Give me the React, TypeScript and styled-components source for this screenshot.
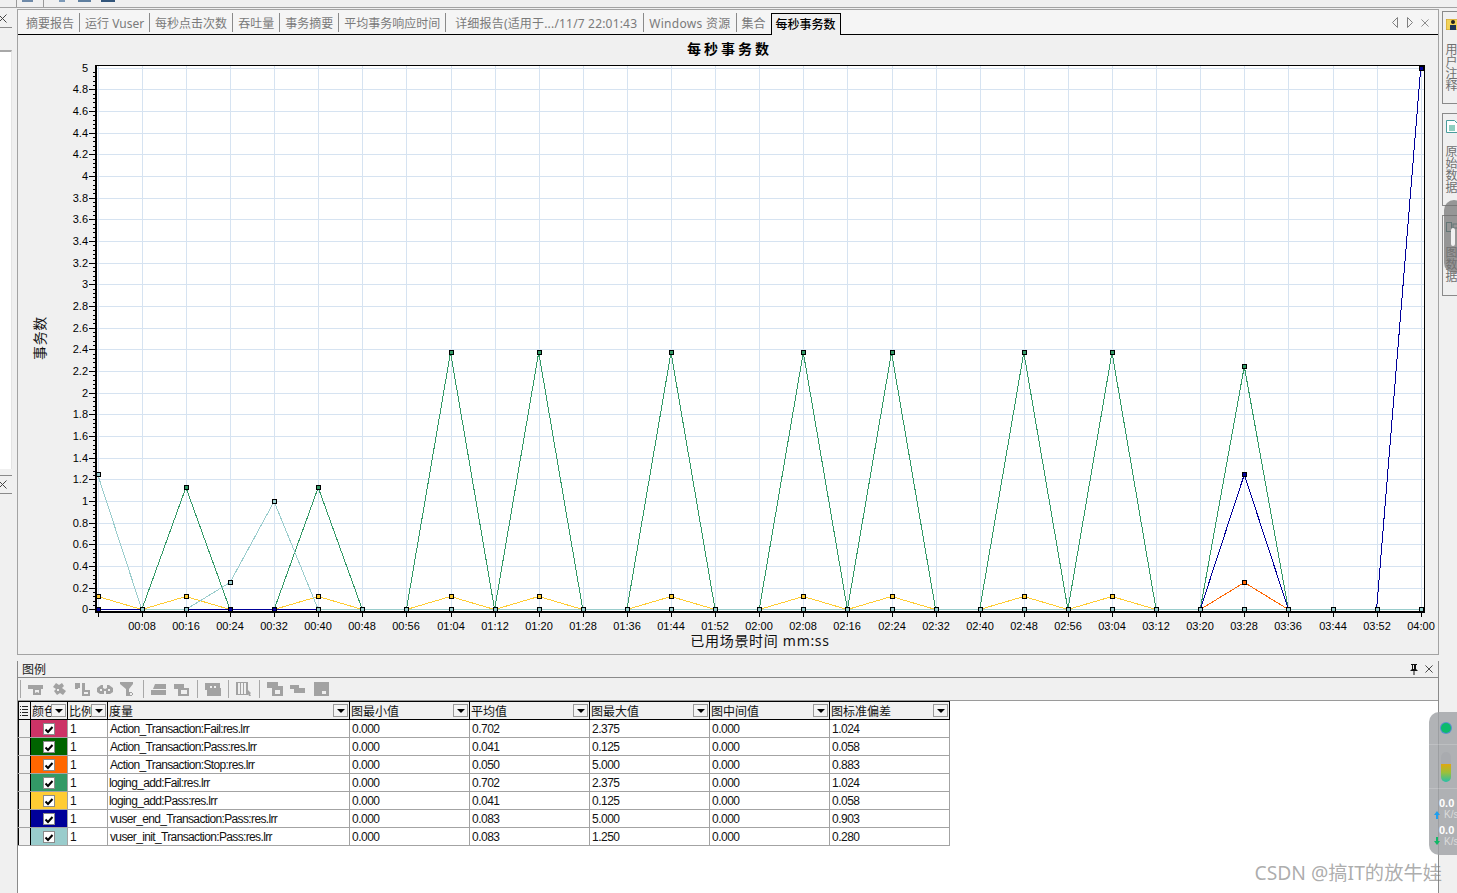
import React from "react";
import styled, { createGlobalStyle } from "styled-components";

const Global = createGlobalStyle`
  html, body { margin: 0; padding: 0; background: #f0f0f0; }
  #root { width: 1457px; height: 893px; overflow: hidden; }
`;

const FONT = `"Noto Sans", "Noto Sans CJK SC", sans-serif`;
const CELL_FONT = `"Liberation Sans", "Noto Sans CJK SC", sans-serif`;

const Page = styled.div`
  position: relative;
  width: 1457px;
  height: 893px;
  overflow: hidden;
  background: #f0f0f0;
  font-family: ${FONT};
  display: flex;
  flex-direction: column;
`;
const TopStrip = styled.div`
  height: 7px;
  flex: none;
  border-bottom: 1px solid #a3a3a3;
  display: flex;
  align-items: flex-end;
  overflow: hidden;
`;
const TopSep = styled.span<{ $left: number }>`
  width: 1px;
  height: 7px;
  background: #9a9a9a;
  margin-left: ${(p) => p.$left}px;
`;
const TopBit = styled.span<{ $left: number; $w: number; $c: string }>`
  width: ${(p) => p.$w}px;
  height: 2px;
  background: ${(p) => p.$c};
  margin: 0 0 5px ${(p) => p.$left}px;
`;
const Body = styled.div`
  flex: 1;
  display: flex;
  min-height: 0;
`;
const LeftColumn = styled.div`
  width: 17px;
  flex: none;
  display: flex;
  flex-direction: column;
`;
const PaneClose = styled.div<{ $top?: boolean }>`
  width: 12px;
  height: 17px;
  margin-top: ${(p) => (p.$top ? 6 : 2)}px;
  border-bottom: 1px solid #8a8a8a;
  border-top: ${(p) => (p.$top ? "1px solid #8a8a8a" : "none")};
  display: flex;
  align-items: center;
  overflow: hidden;
  color: #444;
  & > svg {
    margin-left: -2px;
    flex: none;
  }
`;
const WhitePane = styled.div`
  width: 11px;
  height: 417px;
  margin-top: 22px;
  background: #fff;
  border-top: 2px solid #a8a8a8;
  border-right: 1px solid #e4e4e4;
`;
const Center = styled.div`
  width: 1422px;
  flex: none;
  display: flex;
  flex-direction: column;
`;
const ChartPanel = styled.section`
  height: 646px;
  margin-top: 1px;
  flex: none;
  box-sizing: border-box;
  border: 1px solid #a3a3a3;
  display: flex;
  flex-direction: column;
`;
const TabBar = styled.nav`
  height: 25px;
  flex: none;
  box-sizing: border-box;
  background: #f5f5f5;
  border-bottom: 1px solid #000;
  display: flex;
  align-items: flex-end;
  padding-left: 3px;
  padding-bottom: 2px;
`;
const Tab = styled.span<{ $pl?: number; $pr?: number; $ls?: number; $last?: boolean }>`
  height: 19px;
  line-height: 22px;
  font-size: 12px;
  color: #7a7a7a;
  white-space: nowrap;
  letter-spacing: ${(p) => p.$ls ?? 0}px;
  padding: 0 ${(p) => p.$pr ?? 5}px 0 ${(p) => p.$pl ?? 5}px;
  border-right: ${(p) => (p.$last ? "none" : "1px solid #8a8a8a")};
`;
const ActiveTab = styled.span`
  height: 22px;
  box-sizing: border-box;
  margin: 0 0 -3px 0;
  padding: 0 4px 0 4px;
  line-height: 21px;
  font-size: 12px;
  font-weight: 500;
  color: #000;
  background: #f0f0f0;
  border: 1px solid #000;
  border-bottom: none;
  white-space: nowrap;
`;
const TabNav = styled.div`
  margin-left: auto;
  display: flex;
  align-items: center;
  gap: 7px;
  height: 19px;
  padding-right: 9px;
  color: #808080;
`;
const ChartTitle = styled.h1`
  margin: 0;
  height: 28px;
  flex: none;
  text-align: center;
  font-size: 14px;
  line-height: 28px;
  font-weight: 700;
  letter-spacing: 3px;
  color: #000;
  padding-left: 3px;
`;
const ChartSvg = styled.svg`
  display: block;
  width: 1420px;
  height: 591px;
  flex: none;
`;
const AxisText = styled.text`
  font-family: ${CELL_FONT};
  font-size: 11px;
  fill: #000;
`;
const AxisTitle = styled.text`
  font-family: ${FONT};
  font-size: 14px;
  letter-spacing: 0.7px;
  fill: #111;
`;
const LegendPanel = styled.section`
  flex: 1;
  margin-top: 6px;
  display: flex;
  flex-direction: column;
  min-height: 0;
  border-left: 1px solid #8a8a8a;
  border-right: 1px solid #8a8a8a;
  box-sizing: border-box;
  width: 1422px;
`;
const LegendHead = styled.header`
  height: 17px;
  flex: none;
  box-sizing: border-box;
  border-bottom: 1px solid #8a8a8a;
  display: flex;
  align-items: center;
  padding: 0 5px 0 4px;
  font-size: 12px;
  color: #222;
`;
const HeadIcons = styled.div`
  margin-left: auto;
  display: flex;
  align-items: center;
  gap: 7px;
  color: #333;
`;
const Toolbar = styled.div`
  height: 22px;
  flex: none;
  box-sizing: border-box;
  display: flex;
  align-items: center;
  padding: 0 0 0 2px;
  background: #f0f0f0;
`;
const ToolSep = styled.span`
  width: 1px;
  height: 18px;
  background: #a8a8a8;
  margin-right: 7px;
`;
const ToolIcon = styled.svg`
  width: 16px;
  height: 14px;
  flex: none;
  margin-right: 7px;
  fill: #a2a2a2;
`;
const TableArea = styled.div`
  flex: 1;
  background: #fff;
  border-top: 1px solid #9a9a9a;
  min-height: 0;
`;
const Grid = styled.table`
  border-collapse: collapse;
  table-layout: fixed;
  width: 931px;
  font-family: ${CELL_FONT};
  font-size: 12px;
  color: #111;
`;
const HeadCell = styled.th`
  height: 18px;
  box-sizing: border-box;
  padding: 0 1px 0 1px;
  background: #f0f0f0;
  border: 1px solid #000;
  font-weight: 400;
  text-align: left;
  overflow: hidden;
`;
const HeadInner = styled.div`
  display: flex;
  align-items: center;
  justify-content: space-between;
  height: 16px;
  font-family: "Noto Sans CJK SC", ${CELL_FONT};
`;
const HeadLabel = styled.span`
  flex: 1;
  min-width: 0;
  overflow: hidden;
  white-space: nowrap;
`;
const DropButton = styled.span`
  flex: none;
  width: 15px;
  height: 13px;
  box-sizing: border-box;
  border: 1px solid #9a9a9a;
  background: #f4f4f4;
  display: flex;
  align-items: center;
  justify-content: center;
  &::after {
    content: "";
    border-left: 4px solid transparent;
    border-right: 4px solid transparent;
    border-top: 4px solid #000;
  }
`;
const Row = styled.tr``;
const Cell = styled.td`
  height: 18px;
  box-sizing: border-box;
  padding: 0 0 0 2px;
  border: 1px solid #a3a3a3;
  white-space: nowrap;
  overflow: hidden;
  letter-spacing: -0.64px;
  line-height: 16px;
`;
const MeasureCell = styled(Cell)<{ $inset?: number }>`
  padding-left: ${(p) => p.$inset ?? 2}px;
`;
const NumberCell = styled(Cell)`
  letter-spacing: -0.5px;
`;
const SelectorCell = styled.td`
  height: 18px;
  box-sizing: border-box;
  padding: 0;
  background: #f0f0f0;
  border: 1px solid #a3a3a3;
  border-left: 1px solid #000;
  border-right: 1px solid #000;
`;
const ColorCell = styled.td<{ $c: string }>`
  height: 18px;
  box-sizing: border-box;
  padding: 0;
  background: ${(p) => p.$c};
  border: 1px solid #a3a3a3;
  border-left: 1px solid #000;
`;
const Check = styled.span`
  display: block;
  box-sizing: border-box;
  width: 12px;
  height: 12px;
  margin: 1px 0 0 12px;
  background: #fff;
  border: 1px solid #8a8a8a;
`;
const RightRail = styled.aside`
  margin-left: 3px;
  flex: 1;
  min-width: 0;
  display: flex;
  flex-direction: column;
  overflow: hidden;
`;
const RailTab = styled.div<{ $h: number; $mt: number; $gap: number; $pt: number }>`
  height: ${(p) => p.$h}px;
  margin-top: ${(p) => p.$mt}px;
  box-sizing: border-box;
  border: 1px solid #8a8a8a;
  border-right: none;
  padding: ${(p) => p.$pt}px 0 0 3px;
  display: flex;
  flex-direction: column;
  gap: ${(p) => p.$gap}px;
  width: 20px;
`;
const RailText = styled.span`
  writing-mode: vertical-rl;
  text-orientation: upright;
  font-size: 12px;
  line-height: 12px;
  color: #6f6f6f;
  width: 12px;
  margin-left: -2px;
`;
const ScrollBlob = styled.div`
  position: absolute;
  left: 1444px;
  top: 200px;
  width: 20px;
  height: 73px;
  border-radius: 12px;
  background: rgba(115, 115, 115, 0.72);
`;
const ScrollThumb = styled.div`
  position: absolute;
  left: 1451px;
  top: 228px;
  width: 4px;
  height: 18px;
  border-radius: 2px;
  background: #f1f1f1;
`;
const NetWidget = styled.div`
  position: absolute;
  left: 1429px;
  top: 712px;
  width: 40px;
  height: 143px;
  box-sizing: border-box;
  border-radius: 10px;
  background: rgba(160, 162, 166, 0.82);
  display: flex;
  flex-direction: column;
  align-items: flex-start;
`;
const WidgetBlock = styled.div<{ $h: number; $line?: boolean }>`
  height: ${(p) => p.$h}px;
  width: 100%;
  box-sizing: border-box;
  border-bottom: ${(p) => (p.$line ? "1px solid rgba(255,255,255,.18)" : "none")};
  display: flex;
  align-items: center;
  padding-left: 12px;
`;
const Dot = styled.span`
  width: 10px;
  height: 10px;
  border-radius: 50%;
  background: #0dbb6c;
  box-shadow: 0 0 0 1px #5a8fd0;
`;
const Battery = styled.span`
  width: 10px;
  height: 30px;
  border-radius: 5px;
  background: linear-gradient(#a9abaf 0 40%, #e0a70f 40%, #9cc03a 68%, #27bfa8 100%);
`;
const SpeedList = styled.div`
  display: flex;
  flex-direction: column;
  gap: 4px;
  padding-top: 8px;
`;
const Speed = styled.div`
  display: grid;
  grid-template-columns: 11px auto;
  padding-left: 4px;
  height: 23px;
  font-family: ${CELL_FONT};
  font-size: 11px;
  line-height: 12px;
  color: #fff;
  font-weight: 700;
`;
const SpeedValue = styled.span`
  grid-column: 1 / span 2;
  padding-left: 6px;
`;
const SpeedUnit = styled.span`
  font-weight: 400;
  font-size: 10px;
  color: #dcdcdc;
`;
const Watermark = styled.div`
  position: absolute;
  right: 15px;
  top: 860px;
  font-family: "Noto Sans", "Noto Sans CJK SC", sans-serif;
  font-size: 19.3px;
  line-height: 26px;
  white-space: nowrap;
  color: rgba(120, 120, 120, 0.62);
`;

const X0 = 97.7;
const XS = 44.1;
const Y0 = 609.3;
const YS = 108.3;
const xp = (i: number) => X0 + i * XS;
const yp = (v: number) => Y0 - v * YS;
const pad = (n: number) => String(n).padStart(2, "0");
const timeLabel = (i: number) => `${pad(Math.floor((i * 8) / 60))}:${pad((i * 8) % 60)}`;

const build = (m: Record<number, number>) => Array.from({ length: 31 }, (_, i) => m[i] ?? 0);
const failPeaks = { 2: 1.125, 5: 1.125, 8: 2.375, 10: 2.375, 13: 2.375, 16: 2.375, 18: 2.375, 21: 2.375, 23: 2.375, 26: 2.25 };
const passPeaks = { 0: 0.125, 2: 0.125, 5: 0.125, 8: 0.125, 10: 0.125, 13: 0.125, 16: 0.125, 18: 0.125, 21: 0.125, 23: 0.125 };

const series = [
  { c: "#cc3366", d: build(failPeaks) },
  { c: "#006400", d: build(passPeaks) },
  { c: "#ff6600", d: build({ 26: 0.25, 30: 5 }) },
  { c: "#339966", d: build(failPeaks) },
  { c: "#ffcc33", d: build(passPeaks) },
  { c: "#000099", d: build({ 26: 1.25, 30: 5 }) },
  { c: "#99cccc", d: build({ 0: 1.25, 3: 0.25, 4: 1 }) },
];

const rows = [
  ["#cc3366", "Action_Transaction:Fail:res.lrr", 2, "0.702", "2.375", "1.024"],
  ["#006400", "Action_Transaction:Pass:res.lrr", 2, "0.041", "0.125", "0.058"],
  ["#ff6600", "Action_Transaction:Stop:res.lrr", 2, "0.050", "5.000", "0.883"],
  ["#339966", "loging_add:Fail:res.lrr", 1, "0.702", "2.375", "1.024"],
  ["#ffcc33", "loging_add:Pass:res.lrr", 1, "0.041", "0.125", "0.058"],
  ["#000099", "vuser_end_Transaction:Pass:res.lrr", 2, "0.083", "5.000", "0.903"],
  ["#99cccc", "vuser_init_Transaction:Pass:res.lrr", 2, "0.083", "1.250", "0.280"],
] as const;

const columns = [12, 37, 40, 242, 120, 120, 120, 120, 120];
const heads = ["颜色", "比例", "度量", "图最小值", "平均值", "图最大值", "图中间值", "图标准偏差"];
const tabs = ["摘要报告", "运行 Vuser", "每秒点击次数", "吞吐量", "事务摘要", "平均事务响应时间"];

const toolPaths = [
  "M0 3h15v4h-2v6H5V7H0zM7 8v3l2-1 2 1V8z",
  "M5 1l3 2 3-2 2 3-2 2 4 3-3 4-3-2-3 2-3-4 2-2-3-2zM6 7v2h2V7z",
  "M1 1h5v5H4v1H1zM8 1h3v7h5v6H8zM10 10v2h4v-2z",
  "M0 6l4-3h2v3l2 1 2-1V3h2l4 3v4l-3 2H9V9H7v3H3L0 10zM3 7v2h2V7zM11 7v2h2V7z",
  "M0 0h13v2l-4 5v3h3v4H6V7L0 2zM10 11v2h3v-2z",
  "M4 2h11v5H2zM0 8h15v5H0z",
  "M0 2h10v4h5v8H4V7H0zM7 8v4h6V8z",
  "M0 1h15v5h1v8H2V8H0zM5 4v2h2V4zM9 4v2h2V4z",
  "M0 0h12v13H0zM2 1v11h2V1zM5 1v11h2V1zM8 1v11h2V1zM12 8l3 3-1 1 1 2h-2l-1-2z",
  "M0 0h11v4h5v10H5V6H0zM8 8v4h5V8z",
  "M0 3h9v3h6v5H4V7H0z",
  "M1 0h15v14H1zM9 9v3h4V9z",
];
const toolGroups = [[0, 1, 2, 3, 4], [5, 6], [7], [8], [9, 10, 11]];

function CloseGlyph({ size = 9 }: { size?: number }) {
  return (
    <svg width={size} height={size} viewBox="0 0 9 9" fill="none" stroke="currentColor" strokeWidth="1">
      <path d="M0.5 0.5l8 8M8.5 0.5l-8 8" />
    </svg>
  );
}

function Chart() {
  const vGrid = Array.from({ length: 31 }, (_, i) => Math.round(xp(i)) + 0.5);
  const hVals = Array.from({ length: 26 }, (_, i) => i * 0.2);
  const minor = Array.from({ length: 125 }, (_, i) => yp(i * 0.04));
  return (
    <ChartSvg viewBox="18 63 1420 591">
      <rect x="96" y="65" width="1328" height="546" fill="#fff" />
      <g stroke="#d6e3f1" strokeWidth="1" shapeRendering="crispEdges">
        {vGrid.map((x) => (
          <line key={x} x1={x} x2={x} y1="66" y2="611" />
        ))}
        {hVals.map((v) => (
          <line key={v} x1="97" x2="1424" y1={Math.round(yp(v)) + 0.5} y2={Math.round(yp(v)) + 0.5} />
        ))}
      </g>
      <g stroke="#000" shapeRendering="crispEdges">
        <line x1="95" x2="1425" y1="65.5" y2="65.5" />
        <line x1="1424.5" x2="1424.5" y1="65" y2="613" />
        <rect x="95" y="65" width="2" height="548" fill="#000" stroke="none" />
        <rect x="95" y="611" width="1330" height="2" fill="#000" stroke="none" />
        {minor.map((y, i) => (
          <line key={i} x1={i % 5 === 0 ? 89 : 93} x2="95" y1={Math.round(y) + 0.5} y2={Math.round(y) + 0.5} />
        ))}
        {vGrid.map((x) => (
          <line key={x} x1={x} x2={x} y1="613" y2="617" />
        ))}
      </g>
      {hVals.map((v) => (
        <AxisText key={v} x="88" y={yp(v) + 4} textAnchor="end">
          {Number(v.toFixed(1))}
        </AxisText>
      ))}
      {vGrid.slice(1).map((x, i) => (
        <AxisText key={x} x={x - 0.5} y="630" textAnchor="middle">
          {timeLabel(i + 1)}
        </AxisText>
      ))}
      {series.map((s) => (
        <polyline
          key={s.c}
          fill="none"
          stroke={s.c}
          strokeWidth="1"
          shapeRendering="crispEdges"
          points={s.d.map((v, i) => `${xp(i)},${Math.round(yp(v)) + 0.5}`).join(" ")}
        />
      ))}
      {series.map((s) =>
        s.d.map((v, i) =>
          v > 0 || s.c === "#99cccc" || (s.c === "#000099" && i < 5) ? (
            <rect
              key={s.c + i}
              x={Math.round(xp(i)) - 2}
              y={Math.round(yp(v)) - 2}
              width="4"
              height="4"
              fill={s.c}
              stroke="#000"
              strokeWidth="1"
              shapeRendering="crispEdges"
            />
          ) : null,
        ),
      )}
      <AxisTitle x="39" y="338" textAnchor="middle" dominantBaseline="central" transform="rotate(-90 39 338)">
        事务数
      </AxisTitle>
      <AxisTitle x="760" y="646" textAnchor="middle">
        已用场景时间 mm:ss
      </AxisTitle>
    </ChartSvg>
  );
}

export default function App() {
  return (
    <Page>
      <Global />
      <TopStrip>
        <TopSep $left={16} />
        <TopBit $left={5} $w={11} $c="#6f8aa8" />
        <TopSep $left={10} />
        <TopBit $left={15} $w={6} $c="#7c9ab8" />
        <TopBit $left={13} $w={13} $c="#5f7f9f" />
        <TopBit $left={10} $w={14} $c="#33557a" />
      </TopStrip>
      <Body>
        <LeftColumn>
          <PaneClose>
            <CloseGlyph />
          </PaneClose>
          <WhitePane />
          <PaneClose $top>
            <CloseGlyph />
          </PaneClose>
        </LeftColumn>
        <Center>
          <ChartPanel>
            <TabBar>
              {tabs.map((t) => (
                <Tab key={t} $pl={5} $pr={5}>
                  {t}
                </Tab>
              ))}
              <Tab $pl={9} $pr={6} $ls={0.18}>
                详细报告(适用于.../11/7 22:01:43
              </Tab>
              <Tab $ls={0.3}>Windows 资源</Tab>
              <Tab $last>集合</Tab>
              <ActiveTab>每秒事务数</ActiveTab>
              <TabNav>
                <svg width="8" height="11" viewBox="0 0 8 11" fill="none" stroke="currentColor">
                  <path d="M6.5 0.5v10l-5-5z" />
                </svg>
                <svg width="8" height="11" viewBox="0 0 8 11" fill="none" stroke="currentColor">
                  <path d="M1.5 0.5v10l5-5z" />
                </svg>
                <CloseGlyph size={8} />
              </TabNav>
            </TabBar>
            <ChartTitle>每秒事务数</ChartTitle>
            <Chart />
          </ChartPanel>
          <LegendPanel>
            <LegendHead>
              图例
              <HeadIcons>
                <svg width="8" height="11" viewBox="0 0 8 11" fill="#111">
                  <path d="M1 0h6v1H6v4l2 2H4.500v4h-1V7H0l2-2V1H1zM3 1v4h1V1z" />
                </svg>
                <CloseGlyph size={8} />
              </HeadIcons>
            </LegendHead>
            <Toolbar>
              {toolGroups.map((g, gi) => (
                <React.Fragment key={gi}>
                  <ToolSep />
                  {g.map((i) => (
                    <ToolIcon key={i} viewBox="0 0 16 14">
                      <path fillRule="evenodd" d={toolPaths[i]} />
                    </ToolIcon>
                  ))}
                </React.Fragment>
              ))}
            </Toolbar>
            <TableArea>
              <Grid>
                <colgroup>
                  {columns.map((w, i) => (
                    <col key={i} width={w} />
                  ))}
                </colgroup>
                <thead>
                  <tr>
                    <HeadCell>
                      <HeadInner>
                        <svg width="8" height="11" viewBox="0 0 8 11" stroke="#222">
                          <path d="M0 1.500h1M2 1.500h6M0 4.500h1M2 4.500h6M0 7.500h1M2 7.500h6M0 10.500h1M2 10.500h6" />
                        </svg>
                      </HeadInner>
                    </HeadCell>
                    {heads.map((h) => (
                      <HeadCell key={h}>
                        <HeadInner>
                          <HeadLabel>{h}</HeadLabel>
                          <DropButton />
                        </HeadInner>
                      </HeadCell>
                    ))}
                  </tr>
                </thead>
                <tbody>
                  {rows.map(([color, name, inset, avg, max, dev]) => (
                    <Row key={name}>
                      <SelectorCell />
                      <ColorCell $c={color}>
                        <Check>
                          <svg width="10" height="10" viewBox="0 0 10 10" fill="none" stroke="#000" strokeWidth="2">
                            <path d="M1.500 4.500l2.500 2.500 4.500-5" />
                          </svg>
                        </Check>
                      </ColorCell>
                      <Cell>1</Cell>
                      <MeasureCell $inset={inset}>{name}</MeasureCell>
                      <NumberCell>0.000</NumberCell>
                      <NumberCell>{avg}</NumberCell>
                      <NumberCell>{max}</NumberCell>
                      <NumberCell>0.000</NumberCell>
                      <NumberCell>{dev}</NumberCell>
                    </Row>
                  ))}
                </tbody>
              </Grid>
            </TableArea>
          </LegendPanel>
        </Center>
        <RightRail>
          <RailTab $h={93} $mt={3} $pt={7} $gap={13}>
            <svg width="12" height="11" viewBox="0 0 12 11">
              <rect width="12" height="11" fill="#f2d35a" stroke="#c79a2a" />
              <circle cx="7" cy="3" r="2" fill="#222" />
              <path d="M4 11V6h6v5z" fill="#1d3557" />
            </svg>
            <RailText>用户注释</RailText>
          </RailTab>
          <RailTab $h={93} $mt={9} $pt={6} $gap={12}>
            <svg width="12" height="13" viewBox="0 0 12 13">
              <path d="M0.500 0.500h8l3 3v9h-11z" fill="#fff" stroke="#4a9d9d" />
              <path d="M3 5h6v6H3z" fill="#8fcfc0" />
            </svg>
            <RailText>原始数据</RailText>
          </RailTab>
          <RailTab $h={81} $mt={9} $pt={6} $gap={13}>
            <svg width="12" height="11" viewBox="0 0 12 11" fill="none" stroke="#3f7f7f">
              <rect x="0.500" y="0.500" width="5" height="9" />
              <rect x="7" y="2" width="5" height="4" />
            </svg>
            <RailText>图数据</RailText>
          </RailTab>
        </RightRail>
      </Body>
      <ScrollBlob />
      <ScrollThumb />
      <NetWidget>
        <WidgetBlock $h={33} $line>
          <Dot />
        </WidgetBlock>
        <WidgetBlock $h={44} $line>
          <Battery />
        </WidgetBlock>
        <SpeedList>
          <Speed>
            <SpeedValue>0.0</SpeedValue>
            <svg width="8" height="11" viewBox="0 0 8 11" fill="#1e9ff0">
              <path d="M4 2l3 4H5v4H3V6H1z" />
            </svg>
            <SpeedUnit>K/s</SpeedUnit>
          </Speed>
          <Speed>
            <SpeedValue>0.0</SpeedValue>
            <svg width="8" height="11" viewBox="0 0 8 11" fill="#10b866">
              <path d="M3 1h2v4h2l-3 4-3-4h2z" />
            </svg>
            <SpeedUnit>K/s</SpeedUnit>
          </Speed>
        </SpeedList>
      </NetWidget>
      <Watermark>CSDN @搞IT的放牛娃</Watermark>
    </Page>
  );
}
